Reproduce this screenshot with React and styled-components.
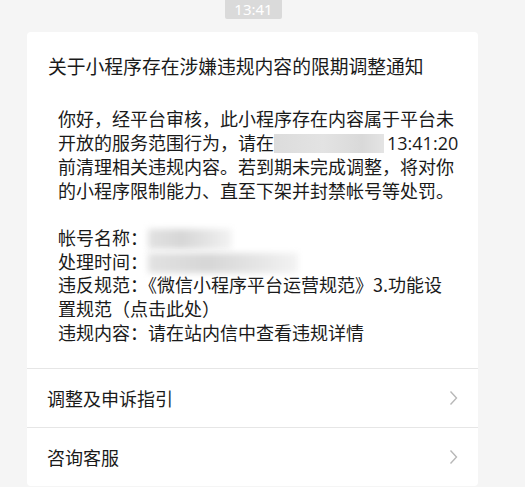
import React from 'react'
import styled, { createGlobalStyle } from 'styled-components'

const GlobalStyle = createGlobalStyle`
  html, body {
    margin: 0;
    padding: 0;
    background: #f5f5f5;
  }
  body {
    font-family: "Noto Sans CJK SC", "Microsoft YaHei", sans-serif;
    color: #1a1a1a;
  }
`

const Page = styled.div`
  width: 525px;
  height: 487px;
  overflow: hidden;
  display: flex;
  flex-direction: column;
  align-items: flex-start;
`

const TimeRow = styled.div`
  width: 100%;
  display: flex;
  padding-left: 225px;
  box-sizing: border-box;
`

const TimeBadge = styled.div`
  width: 57px;
  height: 20px;
  margin-top: -1px;
  background: #dadada;
  color: #fff;
  font-family: "Noto Sans", "Liberation Sans", sans-serif;
  font-size: 15px;
  line-height: 20px;
  text-align: center;
  border-radius: 0 0 2px 2px;
`

const Card = styled.div`
  margin: 13px 0 0 27px;
  width: 451px;
  background: #fff;
  border-radius: 4px;
`

const Title = styled.div`
  padding: 20px 0 0 21px;
  font-size: 18.8px;
  line-height: 28px;
  white-space: nowrap;
`

const Body = styled.div`
  padding: 27px 0 24px 31px;
  font-size: 18px;
  line-height: 23.7px;
  white-space: nowrap;
`

const Num = styled.span`
  font-family: "Open Sans", "Noto Sans", sans-serif;
  font-size: 18px;
`

const Redact = styled.span`
  display: inline-block;
  vertical-align: ${(p) => p.$valign || '-3px'};
  width: ${(p) => p.$w}px;
  height: ${(p) => p.$h}px;
  margin-right: ${(p) => p.$gap || 0}px;
  background: ${(p) =>
    p.$soft
      ? 'linear-gradient(90deg, #e2e2e2 0%, #d6d6d6 40%, #e6e6e6 75%, #f3f3f3 100%)'
      : 'linear-gradient(90deg, #dcdcdc 0%, #e3e3e3 45%, #d9d9d9 80%, #e4e4e4 100%)'};
  filter: ${(p) => (p.$soft ? 'blur(3px)' : 'none')};
`

const Blank = styled.div`
  height: 23px;
`

const MenuItem = styled.div`
  height: 58px;
  border-top: 1px solid #e6e6e6;
  display: flex;
  align-items: center;
  justify-content: space-between;
  padding: 0 20px 0 20px;
  font-size: 18px;
`

const Chevron = () => (
  <svg width="9" height="16" viewBox="0 0 9 16">
    <path d="M1.5 1.5 L7.5 8 L1.5 14.5" fill="none" stroke="#b8b8b8" strokeWidth="1.4" />
  </svg>
)

export default function App() {
  return (
    <Page>
      <GlobalStyle />
      <TimeRow>
        <TimeBadge>13:41</TimeBadge>
      </TimeRow>
      <Card>
        <Title>关于小程序存在涉嫌违规内容的限期调整通知</Title>
        <Body>
          你好，经平台审核，此小程序存在内容属于平台未
          <br />
          开放的服务范围行为，请在
          <Redact $w={110} $h={19} $gap={3} />
          <Num>13:41:20</Num>
          <br />
          前清理相关违规内容。若到期未完成调整，将对你
          <br />
          的小程序限制能力、直至下架并封禁帐号等处罚。
          <Blank />
          帐号名称：
          <Redact $soft $w={84} $h={20} $valign="-4px" />
          <br />
          处理时间：
          <Redact $soft $w={150} $h={20} $valign="-4px" />
          <br />
          违反规范：《微信小程序平台运营规范》3.功能设
          <br />
          置规范（点击此处）
          <br />
          违规内容：请在站内信中查看违规详情
        </Body>
        <MenuItem>
          <span>调整及申诉指引</span>
          <Chevron />
        </MenuItem>
        <MenuItem>
          <span>咨询客服</span>
          <Chevron />
        </MenuItem>
      </Card>
    </Page>
  )
}
